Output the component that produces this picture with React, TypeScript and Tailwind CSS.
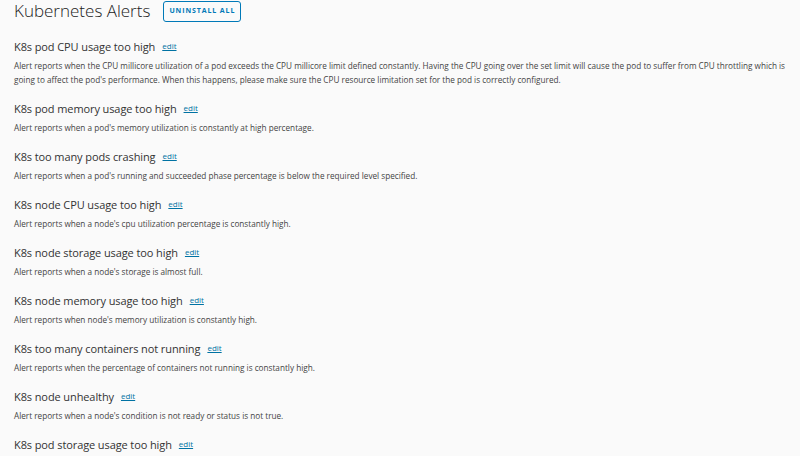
import React from "react";

const items = [
  {
    title: "K8s pod CPU usage too high",
    desc: "Alert reports when the CPU millicore utilization of a pod exceeds the CPU millicore limit defined constantly. Having the CPU going over the set limit will cause the pod to suffer from CPU throttling which is going to affect the pod's performance. When this happens, please make sure the CPU resource limitation set for the pod is correctly configured.",
  },
  { title: "K8s pod memory usage too high", desc: "Alert reports when a pod's memory utilization is constantly at high percentage." },
  { title: "K8s too many pods crashing", desc: "Alert reports when a pod's running and succeeded phase percentage is below the required level specified." },
  { title: "K8s node CPU usage too high", desc: "Alert reports when a node's cpu utilization percentage is constantly high." },
  { title: "K8s node storage usage too high", desc: "Alert reports when a node's storage is almost full." },
  { title: "K8s node memory usage too high", desc: "Alert reports when node's memory utilization is constantly high." },
  { title: "K8s too many containers not running", desc: "Alert reports when the percentage of containers not running is constantly high." },
  { title: "K8s node unhealthy", desc: "Alert reports when a node's condition is not ready or status is not true." },
  { title: "K8s pod storage usage too high", desc: "" },
];

export default function App() {
  return (
    <div
      className="h-[456px] w-[800px] overflow-hidden bg-[#fafafa] pl-[14px] pr-[14px] text-[#333]"
      style={{ fontFamily: '"Open Sans", "Liberation Sans", sans-serif' }}
    >
      <div className="flex h-[23px] items-center">
        <h1 className="mb-[2px] text-[17px] font-light leading-none text-[#222]">Kubernetes Alerts</h1>
        <button className="ml-[13px] flex h-[21px] w-[78px] items-center justify-center rounded-[3px] border border-[#0079b8] text-[7px] font-bold tracking-[0.9px] text-[#0079b8]">
          UNINSTALL ALL
        </button>
      </div>
      <div className="mt-[15px] flex flex-col">
        {items.map((it) => (
          <div key={it.title} className="h-[48px] shrink-0 first:h-[62px]">
            <div className="flex h-[16px] items-center">
              <span className="text-[11px] leading-none text-[#333] tracking-[-0.1px]">{it.title}</span>
              <a href="#" className="ml-[7px] text-[8px] leading-none text-[#0072a3] underline">
                edit
              </a>
            </div>
            {it.desc && (
              <p className="mt-[5px] text-[8.2px] leading-[14px] text-[#444]">{it.desc}</p>
            )}
          </div>
        ))}
      </div>
    </div>
  );
}
